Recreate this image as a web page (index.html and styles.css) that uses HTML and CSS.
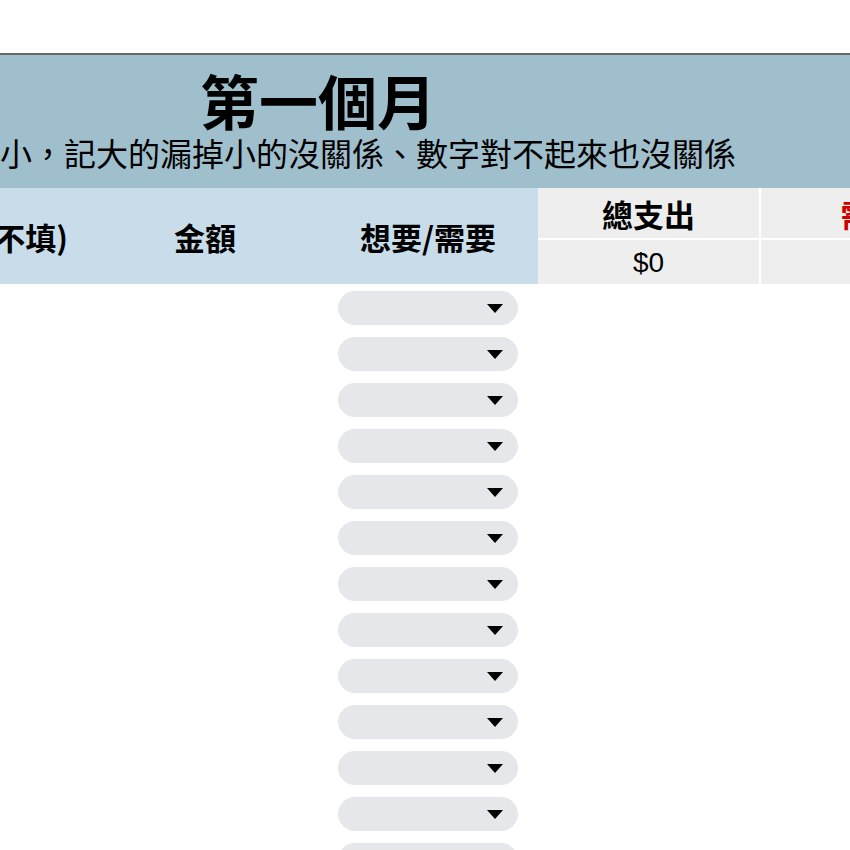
FILE: index.html
```html
<!DOCTYPE html>
<html lang="zh-Hant">
<head>
<meta charset="utf-8">
<title>第一個月</title>
<link rel="stylesheet" href="styles.css">
</head>
<body>
<div class="sheet">
  <div class="top-space"></div>
  <section class="banner">
    <div class="banner-main">
      <h1 class="title">第一個月</h1>
    </div>
    <p class="subtitle">小，記大的漏掉小的沒關係、數字對不起來也沒關係</p>
  </section>
  <div class="header-row">
    <div class="hcell note">不填)</div>
    <div class="hcell">金額</div>
    <div class="hcell">想要/需要</div>
    <div class="stat">
      <div class="stat-label">總支出</div>
      <div class="stat-value">$0</div>
    </div>
    <div class="stat">
      <div class="stat-label red">需要</div>
      <div class="stat-value"></div>
    </div>
  </div>
  <div class="rows">
    <div class="row"><div class="c1"></div><div class="c2"></div><div class="c3"><div class="pill"><span class="caret"></span></div></div></div>
    <div class="row"><div class="c1"></div><div class="c2"></div><div class="c3"><div class="pill"><span class="caret"></span></div></div></div>
    <div class="row"><div class="c1"></div><div class="c2"></div><div class="c3"><div class="pill"><span class="caret"></span></div></div></div>
    <div class="row"><div class="c1"></div><div class="c2"></div><div class="c3"><div class="pill"><span class="caret"></span></div></div></div>
    <div class="row"><div class="c1"></div><div class="c2"></div><div class="c3"><div class="pill"><span class="caret"></span></div></div></div>
    <div class="row"><div class="c1"></div><div class="c2"></div><div class="c3"><div class="pill"><span class="caret"></span></div></div></div>
    <div class="row"><div class="c1"></div><div class="c2"></div><div class="c3"><div class="pill"><span class="caret"></span></div></div></div>
    <div class="row"><div class="c1"></div><div class="c2"></div><div class="c3"><div class="pill"><span class="caret"></span></div></div></div>
    <div class="row"><div class="c1"></div><div class="c2"></div><div class="c3"><div class="pill"><span class="caret"></span></div></div></div>
    <div class="row"><div class="c1"></div><div class="c2"></div><div class="c3"><div class="pill"><span class="caret"></span></div></div></div>
    <div class="row"><div class="c1"></div><div class="c2"></div><div class="c3"><div class="pill"><span class="caret"></span></div></div></div>
    <div class="row"><div class="c1"></div><div class="c2"></div><div class="c3"><div class="pill"><span class="caret"></span></div></div></div>
    <div class="row"><div class="c1"></div><div class="c2"></div><div class="c3"><div class="pill"><span class="caret"></span></div></div></div>
  </div>
</div>
</body>
</html>
```
FILE: styles.css
```css
html, body {
  margin: 0;
  padding: 0;
  background: #ffffff;
  overflow: hidden;
}
body {
  width: 850px;
  height: 850px;
  font-family: "Noto Sans CJK TC", "Liberation Sans", sans-serif;
  color: #000;
}
.sheet {
  width: 1200px;
}
.top-space {
  height: 53px;
}
.banner {
  border-top: 2px solid #666666;
  background: #a0bfcc;
  height: 135px;
  box-sizing: border-box;
  padding-top: 14px;
}
.banner-main {
  width: 636px;
  text-align: center;
}
.title {
  margin: 0;
  font-size: 59px;
  line-height: 62px;
  font-weight: 700;
}
.subtitle {
  margin: 0;
  font-size: 32px;
  line-height: 42px;
  white-space: nowrap;
  font-weight: 400;
}
.header-row {
  display: grid;
  grid-template-columns: 92px 226px 220px 223px 223px;
  height: 96px;
}
.hcell {
  background: #c9dcea;
  display: flex;
  align-items: center;
  justify-content: center;
  font-size: 31px;
  font-weight: 700;
  white-space: nowrap;
}
.hcell.note {
  justify-content: flex-end;
  padding-right: 24px;
  overflow: hidden;
}
.stat {
  display: flex;
  flex-direction: column;
  gap: 2px;
  border-right: 2px solid #ffffff;
}
.stat-label {
  height: 50px;
  background: #eeeeee;
  display: flex;
  align-items: center;
  justify-content: center;
  font-size: 31px;
  font-weight: 700;
  white-space: nowrap;
}
.stat-label.red {
  color: #cc0000;
}
.stat-value {
  flex: 1;
  background: #eeeeee;
  display: flex;
  align-items: center;
  justify-content: center;
  font-family: "Liberation Sans", sans-serif;
  font-size: 28px;
  padding-top: 2px;
}
.rows {
  display: flex;
  flex-direction: column;
}
.row {
  display: grid;
  grid-template-columns: 92px 226px 220px;
  height: 46px;
}
.c3 {
  display: flex;
  align-items: flex-start;
  padding: 7px 20px 0;
}
.pill {
  flex: 1;
  height: 34px;
  border-radius: 17px;
  background: #e6e7ea;
  display: flex;
  align-items: center;
  justify-content: flex-end;
  padding-right: 15px;
}
.caret {
  width: 0;
  height: 0;
  border-left: 8px solid transparent;
  border-right: 8px solid transparent;
  border-top: 9px solid #000000;
}
```
